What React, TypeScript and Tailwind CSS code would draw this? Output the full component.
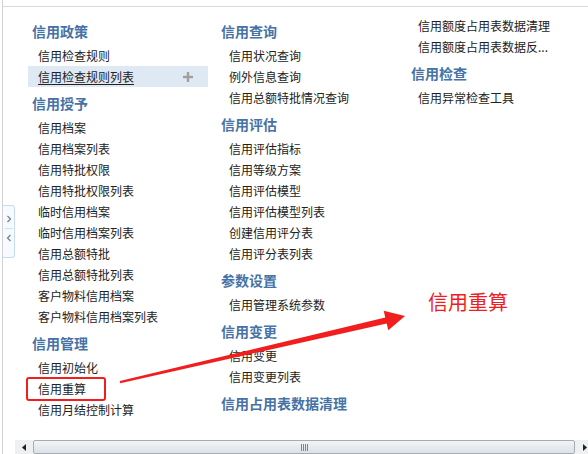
import React from "react";

type Entry = { type: "h" | "i"; text: string; active?: boolean; marked?: boolean };

const col1: Entry[] = [
  { type: "h", text: "信用政策" },
  { type: "i", text: "信用检查规则" },
  { type: "i", text: "信用检查规则列表", active: true },
  { type: "h", text: "信用授予" },
  { type: "i", text: "信用档案" },
  { type: "i", text: "信用档案列表" },
  { type: "i", text: "信用特批权限" },
  { type: "i", text: "信用特批权限列表" },
  { type: "i", text: "临时信用档案" },
  { type: "i", text: "临时信用档案列表" },
  { type: "i", text: "信用总额特批" },
  { type: "i", text: "信用总额特批列表" },
  { type: "i", text: "客户物料信用档案" },
  { type: "i", text: "客户物料信用档案列表" },
  { type: "h", text: "信用管理" },
  { type: "i", text: "信用初始化" },
  { type: "i", text: "信用重算", marked: true },
  { type: "i", text: "信用月结控制计算" },
];

const col2: Entry[] = [
  { type: "h", text: "信用查询" },
  { type: "i", text: "信用状况查询" },
  { type: "i", text: "例外信息查询" },
  { type: "i", text: "信用总额特批情况查询" },
  { type: "h", text: "信用评估" },
  { type: "i", text: "信用评估指标" },
  { type: "i", text: "信用等级方案" },
  { type: "i", text: "信用评估模型" },
  { type: "i", text: "信用评估模型列表" },
  { type: "i", text: "创建信用评分表" },
  { type: "i", text: "信用评分表列表" },
  { type: "h", text: "参数设置" },
  { type: "i", text: "信用管理系统参数" },
  { type: "h", text: "信用变更" },
  { type: "i", text: "信用变更" },
  { type: "i", text: "信用变更列表" },
  { type: "h", text: "信用占用表数据清理" },
];

const col3: Entry[] = [
  { type: "i", text: "信用额度占用表数据清理" },
  { type: "i", text: "信用额度占用表数据反..." },
  { type: "h", text: "信用检查" },
  { type: "i", text: "信用异常检查工具" },
];

function MenuColumn({ items, width, itemPad }: { items: Entry[]; width: string; itemPad: string }) {
  return (
    <div className={`flex flex-col ${width}`}>
      {items.map((e, idx) =>
        e.type === "h" ? (
          <div
            key={idx}
            className="mt-[6px] mb-[3px] h-[21px] pl-[4px] text-[14px] leading-[21px] font-bold text-[#4672a6] whitespace-nowrap"
          >
            {e.text}
          </div>
        ) : (
          <div
            key={idx}
            className={`relative flex h-[21px] items-center whitespace-nowrap text-[12px] leading-[21px] text-[#222] ${itemPad} ${
              e.active ? "bg-[#dfe9f3]" : ""
            }`}
          >
            <span className={e.active ? "underline underline-offset-2" : ""}>{e.text}</span>
            {e.active && (
              <svg className="ml-auto mr-[15px]" width="10" height="10" viewBox="0 0 10 10">
                <rect x="3.8" y="0" width="2.4" height="10" fill="#a0a0a0" />
                <rect x="0" y="3.8" width="10" height="2.4" fill="#a0a0a0" />
              </svg>
            )}
            {e.marked && (
              <div className="absolute left-[-2px] top-[-1px] h-[24px] w-[80px] rounded-[3px] border-2 border-[#f21d1d]" />
            )}
          </div>
        )
      )}
    </div>
  );
}

export default function App() {
  return (
    <div
      className="relative flex h-[454px] w-[588px] overflow-hidden bg-white"
      style={{ fontFamily: '"Noto Sans CJK SC", "Noto Sans", sans-serif' }}
    >
      <div className="w-[2px] shrink-0" />
      <div className="flex flex-1 flex-col border-l border-[#cfd3d8]">
        <div className="h-[6px] shrink-0" />
        <div className="relative flex flex-1 flex-col border-t border-[#d6d9dd]">
          {/* side collapse tab */}
          <div className="absolute left-0 top-[198px] flex h-[53px] w-[12px] flex-col items-center rounded-r-[3px] border border-l-0 border-[#c6dbef] bg-[#f7fbff]">
            <svg className="mt-[9px]" width="6" height="8" viewBox="0 0 6 8">
              <path d="M1.5 1 L4.5 4 L1.5 7" stroke="#6b7f94" strokeWidth="1.2" fill="none" />
            </svg>
            <div className="mt-[5px] h-px w-[8px] bg-[#d5dde6]" />
            <svg className="mt-[5px]" width="6" height="8" viewBox="0 0 6 8">
              <path d="M4.5 1 L1.5 4 L4.5 7" stroke="#6b7f94" strokeWidth="1.2" fill="none" />
            </svg>
          </div>

          <div className="flex flex-1 pl-[25px] pt-[8px]">
            <MenuColumn items={col1} width="w-[180px]" itemPad="pl-[10px]" />
            <div className="w-[9px]" />
            <MenuColumn items={col2} width="w-[190px]" itemPad="pl-[12px]" />
            <MenuColumn items={col3} width="w-[170px]" itemPad="pl-[11px]" />
          </div>

          {/* horizontal scrollbar */}
          <div className="flex h-[14px] shrink-0 pl-[12px]">
            <div className="flex w-[18px] items-center justify-center bg-[#eef0f2]">
              <svg width="4" height="7" viewBox="0 0 4 7">
                <path d="M4 0 L0 3.5 L4 7 Z" fill="#222" />
              </svg>
            </div>
            <div className="flex w-[542px] items-center justify-center rounded-[2px] border border-[#a3abb4] bg-gradient-to-b from-[#f3f4f6] to-[#dde1e6]">
              <div className="flex gap-[1px]">
                <div className="h-[7px] w-px bg-[#7c848c]" />
                <div className="h-[7px] w-px bg-[#7c848c]" />
                <div className="h-[7px] w-px bg-[#7c848c]" />
                <div className="h-[7px] w-px bg-[#7c848c]" />
              </div>
            </div>
            <div className="flex flex-1 items-center justify-end bg-[#eef0f2] pr-[1px]">
              <svg width="4" height="7" viewBox="0 0 4 7">
                <path d="M0 0 L4 3.5 L0 7 Z" fill="#222" />
              </svg>
            </div>
          </div>
        </div>
      </div>

      {/* annotation arrow */}
      <svg className="pointer-events-none absolute left-0 top-0" width="588" height="454" viewBox="0 0 588 454">
        <polygon
          points="119.8,381 385.3,317.6 383.7,310.8 405,316 388.3,330.2 386.7,323.4 120.2,383.2"
          fill="#f21d1d"
        />
      </svg>
      <div className="absolute left-[428px] top-[289px] text-[20px] leading-[26px] text-[#f21d1d]">信用重算</div>
    </div>
  );
}
